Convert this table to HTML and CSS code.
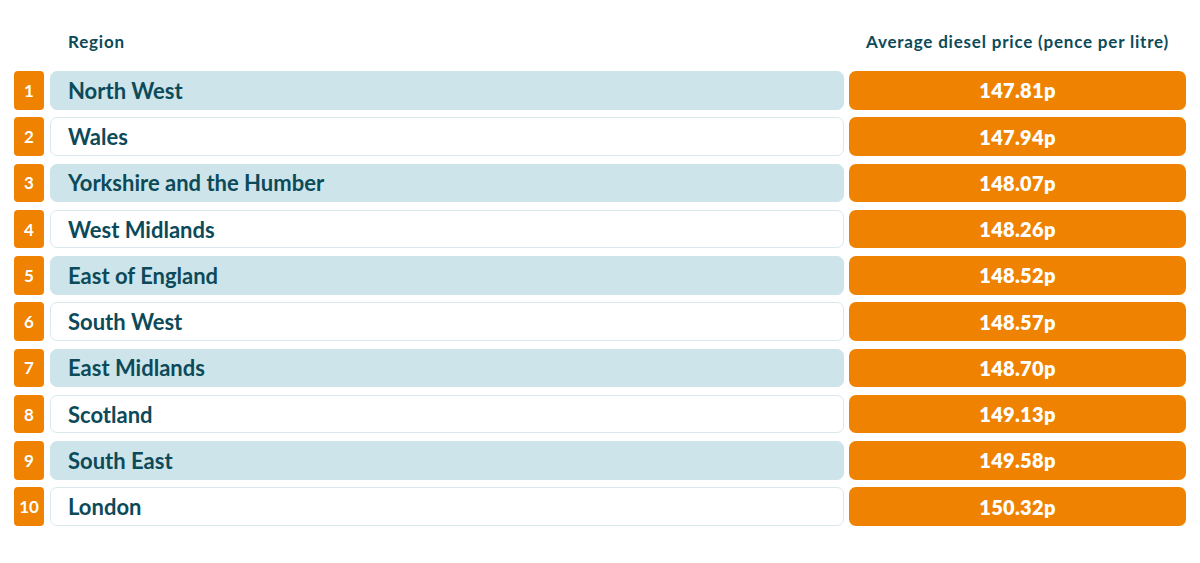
FILE: index.html
```html
<!DOCTYPE html>
<html lang="en">
<head>
<meta charset="utf-8">
<title>Average diesel price by region</title>
<link rel="stylesheet" href="styles.css">
</head>
<body>
<div class="table">
  <div class="head">
    <div class="head-num"></div>
    <div class="head-region">Region</div>
    <div class="head-price">Average diesel price (pence per litre)</div>
  </div>
  <div class="rows">
    <div class="row shaded"><div class="num">1</div><div class="region">North West</div><div class="price">147.81p</div></div>
    <div class="row"><div class="num">2</div><div class="region">Wales</div><div class="price">147.94p</div></div>
    <div class="row shaded"><div class="num">3</div><div class="region">Yorkshire and the Humber</div><div class="price">148.07p</div></div>
    <div class="row"><div class="num">4</div><div class="region">West Midlands</div><div class="price">148.26p</div></div>
    <div class="row shaded"><div class="num">5</div><div class="region">East of England</div><div class="price">148.52p</div></div>
    <div class="row"><div class="num">6</div><div class="region">South West</div><div class="price">148.57p</div></div>
    <div class="row shaded"><div class="num">7</div><div class="region">East Midlands</div><div class="price">148.70p</div></div>
    <div class="row"><div class="num">8</div><div class="region">Scotland</div><div class="price">149.13p</div></div>
    <div class="row shaded"><div class="num">9</div><div class="region">South East</div><div class="price">149.58p</div></div>
    <div class="row"><div class="num">10</div><div class="region">London</div><div class="price">150.32p</div></div>
  </div>
</div>
</body>
</html>
```
FILE: styles.css
```css
html, body {
  margin: 0;
  padding: 0;
  background: #ffffff;
}
body {
  font-family: "Lato", "Open Sans", sans-serif;
  color: #0c4a59;
}
.table {
  padding: 30px 14px 0 14px;
  width: 1172px;
}
.head {
  display: flex;
  align-items: center;
  height: 22px;
  font-weight: 700;
  font-size: 17px;
  letter-spacing: 0.8px;
  margin-bottom: 19px;
}
.head-num {
  width: 30px;
  flex: none;
}
.head-region {
  flex: none;
  width: 794px;
  margin-left: 6px;
  padding-left: 18px;
  box-sizing: border-box;
}
.head-price {
  flex: 1;
  margin-left: 5px;
  text-align: center;
}
.rows {
  display: flex;
  flex-direction: column;
  gap: 7.75px;
}
.row {
  display: flex;
  height: 38.5px;
}
.num {
  width: 30px;
  flex: none;
  background: #ef8200;
  color: #fff;
  border-radius: 4px;
  display: flex;
  align-items: center;
  justify-content: center;
  font-weight: 700;
  font-size: 17px;
}
.region {
  flex: none;
  width: 794px;
  margin-left: 6px;
  box-sizing: border-box;
  border: 1px solid #d9e9ed;
  border-radius: 7px;
  background: #ffffff;
  display: flex;
  align-items: center;
  padding-left: 17px;
  font-size: 22px;
  font-weight: 700;
  color: #0c4a59;
}
.row.shaded .region {
  background: #cde4ea;
  border-color: #cde4ea;
}
.price {
  flex: 1;
  margin-left: 5px;
  background: #ef8200;
  border-radius: 7px;
  color: #fff;
  display: flex;
  align-items: center;
  justify-content: center;
  font-weight: 800;
  font-size: 20px;
  letter-spacing: 0.3px;
}
```
